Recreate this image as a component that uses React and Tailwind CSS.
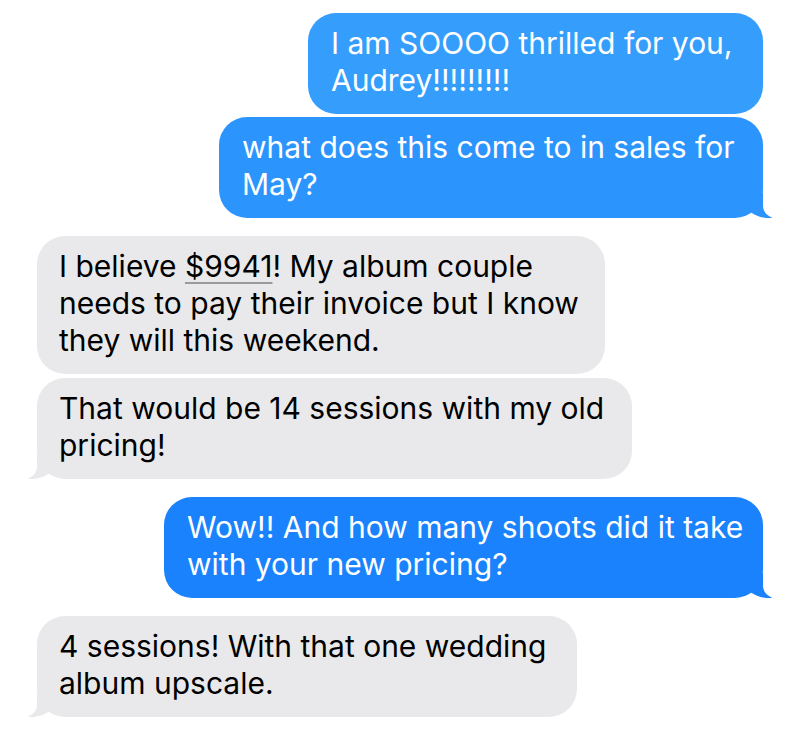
import React from 'react'

const TAIL = 'M20 0 L20 12 C20 18 23 22 29.5 25 C23 25.6 14 24 8 19.5 L8 0 Z'

function Tail({ color, side }) {
  return (
    <svg
      width="30"
      height="26"
      viewBox="0 0 30 26"
      className={
        side === 'right'
          ? 'absolute -right-[10px] -bottom-[1px]'
          : 'absolute -left-[10px] -bottom-[1px] -scale-x-100'
      }
    >
      <path d={TAIL} fill={color} />
    </svg>
  )
}

function Sent({ width, color, tail, children }) {
  return (
    <div className="flex justify-end">
      <div
        className={`relative rounded-[28px] pl-[23px] pr-4 pt-[12px] pb-[15px] text-white ${width} ${color}`}
      >
        <p className="relative z-10">{children}</p>
        {tail && <Tail color={tail} side="right" />}
      </div>
    </div>
  )
}

function Received({ width, tail, children }) {
  return (
    <div className="flex justify-start">
      <div
        className={`relative rounded-[28px] bg-[#e9e9eb] pl-[22px] pr-4 pt-[12px] pb-[15px] text-black ${width}`}
      >
        <p className="relative z-10">{children}</p>
        {tail && <Tail color="#e9e9eb" side="left" />}
      </div>
    </div>
  )
}

export default function App() {
  return (
    <div className="w-[800px] h-[742px] bg-white overflow-hidden px-[37px] pt-[13px] font-['Inter',sans-serif] text-[30px] leading-[37px]">
      <Sent width="w-[455px]" color="bg-[#359efd]">
        I am SOOOO thrilled for you,<br />Audrey!!!!!!!!!
      </Sent>
      <div className="mt-[3px]">
        <Sent width="w-[544px]" color="bg-[#2b95fd]" tail="#2b95fd">
          what does this come to in sales for<br />May?
        </Sent>
      </div>

      <div className="mt-[18px]">
        <Received width="w-[568px]">
          I believe{' '}
          <span className="underline decoration-[#9a9a9c] decoration-2 underline-offset-[5px]">$9941</span>! My album couple<br />
          needs to pay their invoice but I know<br />
          they will this weekend.
        </Received>
      </div>
      <div className="mt-1">
        <Received width="w-[595px]" tail>
          That would be 14 sessions with my old<br />pricing!
        </Received>
      </div>

      <div className="mt-[18px]">
        <Sent width="w-[599px]" color="bg-[#1982fc]" tail="#1982fc">
          Wow!! And how many shoots did it take<br />with your new pricing?
        </Sent>
      </div>

      <div className="mt-[18px]">
        <Received width="w-[540px]" tail>
          4 sessions! With that one wedding<br />album upscale.
        </Received>
      </div>
    </div>
  )
}
